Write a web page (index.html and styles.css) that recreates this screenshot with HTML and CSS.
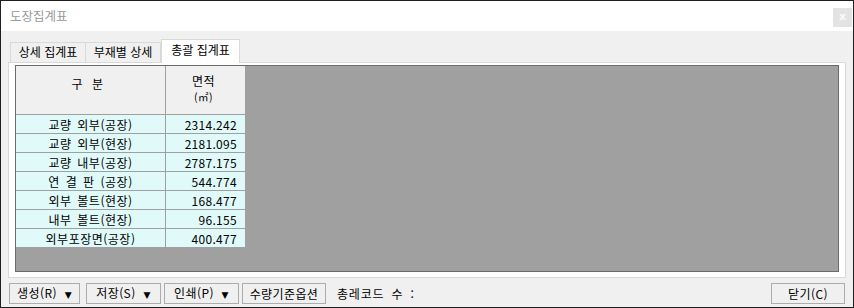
FILE: index.html
```html
<!DOCTYPE html>
<html lang="ko">
<head>
<meta charset="utf-8">
<link rel="stylesheet" href="styles.css">
</head>
<body>
<div class="window">
  <div class="titlebar">
    <span class="title">도장집계표</span>
    <span class="close">x</span>
  </div>
  <div class="content">
    <div class="tabs">
      <div class="tab t1">상세 집계표</div>
      <div class="tab t2">부재별 상세</div>
      <div class="tab t3 active">총괄 집계표</div>
    </div>
    <div class="panel">
      <div class="grid">
        <table class="sheet">
          <colgroup><col class="c1"><col class="c2"></colgroup>
          <thead>
            <tr>
              <th class="h1">구 분</th>
              <th class="h2"><span class="hl">면적</span><span class="unit">(㎡)</span></th>
            </tr>
          </thead>
          <tbody>
            <tr><td class="name">교량 외부(공장)</td><td class="num">2314.242</td></tr>
            <tr><td class="name">교량 외부(현장)</td><td class="num">2181.095</td></tr>
            <tr><td class="name">교량 내부(공장)</td><td class="num">2787.175</td></tr>
            <tr><td class="name">연 결 판 (공장)</td><td class="num">544.774</td></tr>
            <tr><td class="name">외부 볼트(현장)</td><td class="num">168.477</td></tr>
            <tr><td class="name">내부 볼트(현장)</td><td class="num">96.155</td></tr>
            <tr><td class="name">외부포장면(공장)</td><td class="num">400.477</td></tr>
          </tbody>
        </table>
      </div>
    </div>
    <div class="footer">
      <button class="btn b1">생성(R) <span class="arrow">▼</span></button>
      <button class="btn b2">저장(S) <span class="arrow">▼</span></button>
      <button class="btn b3">인쇄(P) <span class="arrow">▼</span></button>
      <button class="btn b4">수량기준옵션</button>
      <span class="count">총레코드 수 :</span>
      <span class="spacer"></span>
      <button class="btn b5">닫기(C)</button>
    </div>
  </div>
</div>
</body>
</html>
```

FILE: styles.css
```css
* { box-sizing: border-box; }
html, body { margin: 0; padding: 0; }
body {
  width: 854px;
  height: 308px;
  background: #f0f0f0;
  font-family: "Noto Sans CJK KR", "Noto Sans", sans-serif;
  font-size: 12px;
  color: #000;
}
.window {
  width: 854px;
  height: 308px;
  border: 1px solid #1f1f1f;
  display: flex;
  flex-direction: column;
  background: #f0f0f0;
}
.titlebar {
  height: 30px;
  flex: none;
  background: #fff;
  display: flex;
  align-items: flex-start;
  justify-content: space-between;
  padding-left: 9px;
}
.title {
  color: #9a9a9a;
  font-size: 12.5px;
  line-height: 14px;
  margin-top: 8px;
}
.close {
  width: 19px;
  height: 19px;
  margin-top: 7px;
  margin-right: 1px;
  background: #e3e3e3;
  color: #fafafa;
  font-family: "DejaVu Sans", sans-serif;
  font-size: 11px;
  font-weight: bold;
  line-height: 17px;
  text-align: center;
}
.content {
  flex: 1;
  display: flex;
  flex-direction: column;
  padding: 8px 7px 0 7px;
}
.tabs {
  height: 23px;
  flex: none;
  display: flex;
  align-items: flex-end;
  padding-left: 2px;
  position: relative;
  z-index: 1;
}
.tab {
  height: 20px;
  border: 1px solid #d9d9d9;
  border-bottom: none;
  background: #f0f0f0;
  text-align: center;
  line-height: 18px;
  font-size: 12px;
}
.t1 { width: 76px; }
.t2 { width: 75px; border-left: none; }
.t3 { width: 79px; }
.tab.active {
  height: 24px;
  margin-bottom: -1px;
  background: #fff;
  line-height: 20px;
  border-left: 1px solid #d9d9d9;
}
.panel {
  height: 216px;
  flex: none;
  border: 1px solid #d9d9d9;
  background: #fff;
  padding: 2px 6px 5px 6px;
}
.grid {
  height: 100%;
  border: 1px solid #6b6b6b;
  background: #a0a0a0;
}
.sheet {
  border-collapse: separate;
  border-spacing: 0;
  table-layout: fixed;
  width: 230px;
  font-size: 12px;
  letter-spacing: 0.5px;
  word-spacing: 2px;
}
.c1 { width: 150px; }
.c2 { width: 80px; }
.sheet th, .sheet td {
  padding: 0;
  border-right: 1px solid #a0a0a0;
  border-bottom: 1px solid #a0a0a0;
  font-weight: normal;
}
.sheet th {
  height: 49px;
  background: #f0f0f0;
  vertical-align: top;
  line-height: 14px;
}
.h1 { padding-top: 11px !important; padding-right: 6px !important; word-spacing: 5px; }
.h2 { padding-top: 8px !important; padding-right: 4px !important; }
.hl { display: block; line-height: 13px; }
.unit { display: block; font-size: 10.5px; line-height: 12px; margin-top: 4px; }
.sheet td {
  height: 19px;
  background: #e0fafa;
  line-height: 17px;
}
.name { text-align: center; }
.num { text-align: right; padding-right: 8px !important; letter-spacing: 0.3px; }
.footer {
  margin-top: 5px;
  height: 21px;
  flex: none;
  display: flex;
  align-items: stretch;
}
.btn {
  height: 21px;
  margin: 0;
  padding: 0;
  border: 1px solid #adadad;
  background: #f0f0f0;
  font-family: "Noto Sans CJK KR", "Noto Sans", sans-serif;
  font-size: 12px;
  line-height: 18px;
  color: #000;
  text-align: center;
  letter-spacing: 0.4px;
}
.arrow { font-family: "DejaVu Sans", sans-serif; font-size: 9px; margin-left: 4px; }
.b1 { width: 71px; margin-left: 1px; }
.b2 { width: 75px; margin-left: 6px; }
.b3 { width: 75px; margin-left: 3px; }
.b4 { width: 84px; margin-left: 3px; }
.count { margin-left: 11px; line-height: 21px; letter-spacing: 0.8px; word-spacing: 3px; }
.spacer { flex: 1; }
.b5 { width: 74px; margin-right: 1px; }
```
